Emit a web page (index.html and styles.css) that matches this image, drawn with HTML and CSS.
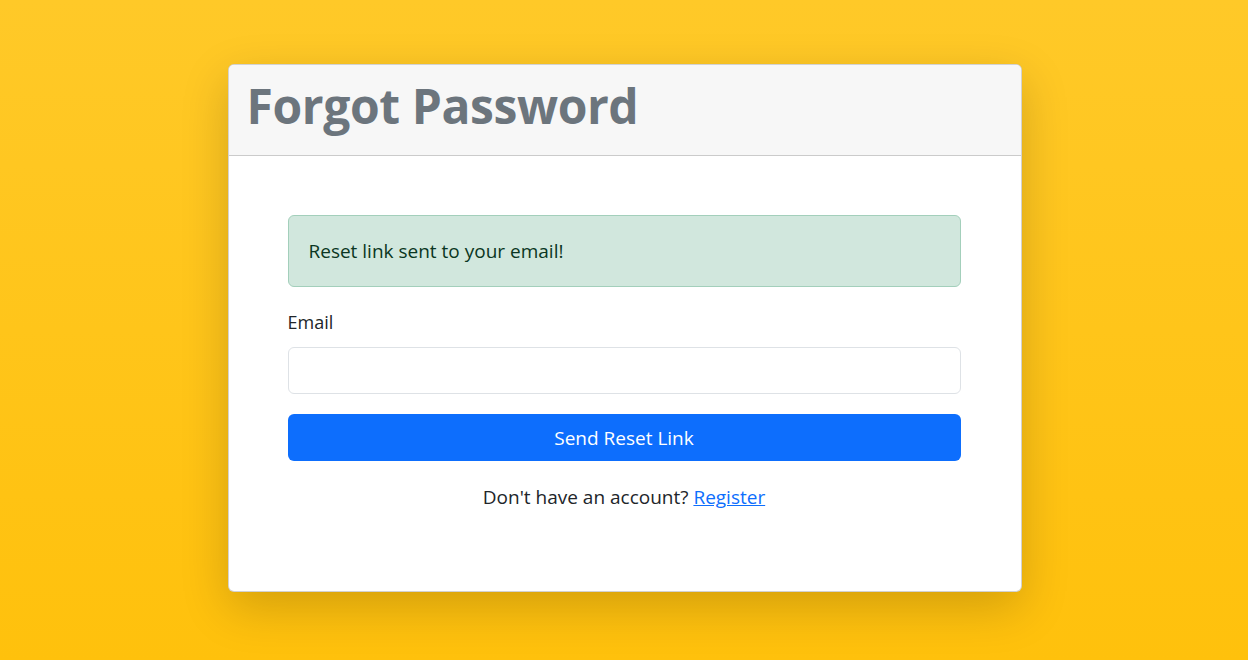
FILE: index.html
```html
<!DOCTYPE html>
<html lang="en">
<head>
    <meta charset="UTF-8">
    <title>Forgot Password</title>
    <link rel="stylesheet" href="styles.css">
</head>
<body>
<div class="card">
    <div class="card-header">
        <h1 class="title">Forgot Password</h1>
    </div>
    <div class="card-body">
        <div class="alert">Reset link sent to your email!</div>
        <form class="reset-form" onsubmit="return false;">
            <label for="email" class="form-label">Email</label>
            <input id="email" name="email" type="email" class="form-control">
            <button type="submit" class="btn">Send Reset Link</button>
        </form>
        <p class="footer-text">Don't have an account? <a href="#">Register</a></p>
    </div>
</div>
</body>
</html>
```

FILE: styles.css
```css
html {
    font-family: "Open Sans", "Noto Sans", sans-serif;
}
body {
    margin: 0;
    min-height: 660px;
    background: linear-gradient(#ffc928, #ffc10c);
    color: #212529;
    font-size: 19px;
    display: flex;
    justify-content: center;
    align-items: flex-start;
}
.card {
    width: 794px;
    margin: 64px 0 0 1px;
    box-sizing: border-box;
    background: #fff;
    border: 1px solid rgba(0, 0, 0, 0.175);
    border-radius: 6px;
    box-shadow: 0 16px 48px rgba(0, 0, 0, 0.175);
    overflow: hidden;
}
.card-header {
    background: #f7f7f7;
    border-bottom: 1px solid rgba(0, 0, 0, 0.175);
    padding: 8px 16px 8px 18px;
}
.title {
    margin: 0 0 8px 0;
    font-size: 48px;
    line-height: 66px;
    font-weight: 700;
    color: #6c757d;
    letter-spacing: -0.4px;
}
.card-body {
    padding: 59px 60px 80px 59px;
}
.alert {
    background: #d1e7dd;
    border: 1px solid #a3cfbb;
    border-radius: 6px;
    color: #0a3622;
    padding: 23px 20px;
    line-height: 24px;
    margin-bottom: 22px;
}
.reset-form {
    display: flex;
    flex-direction: column;
}
.form-label {
    font-size: 18px;
    line-height: 27px;
    margin-bottom: 11px;
}
.form-control {
    height: 47px;
    box-sizing: border-box;
    border: 1px solid #dee2e6;
    border-radius: 6px;
    padding: 8px 16px;
    font-size: 18px;
    font-family: inherit;
}
.btn {
    margin-top: 20px;
    height: 47px;
    border: none;
    border-radius: 6px;
    background: #0d6efd;
    color: #fff;
    font-family: inherit;
    font-size: 19px;
    cursor: pointer;
}
.footer-text {
    margin: 23px 0 0 0;
    text-align: center;
    line-height: 27px;
}
.footer-text a {
    color: #0d6efd;
}
```
